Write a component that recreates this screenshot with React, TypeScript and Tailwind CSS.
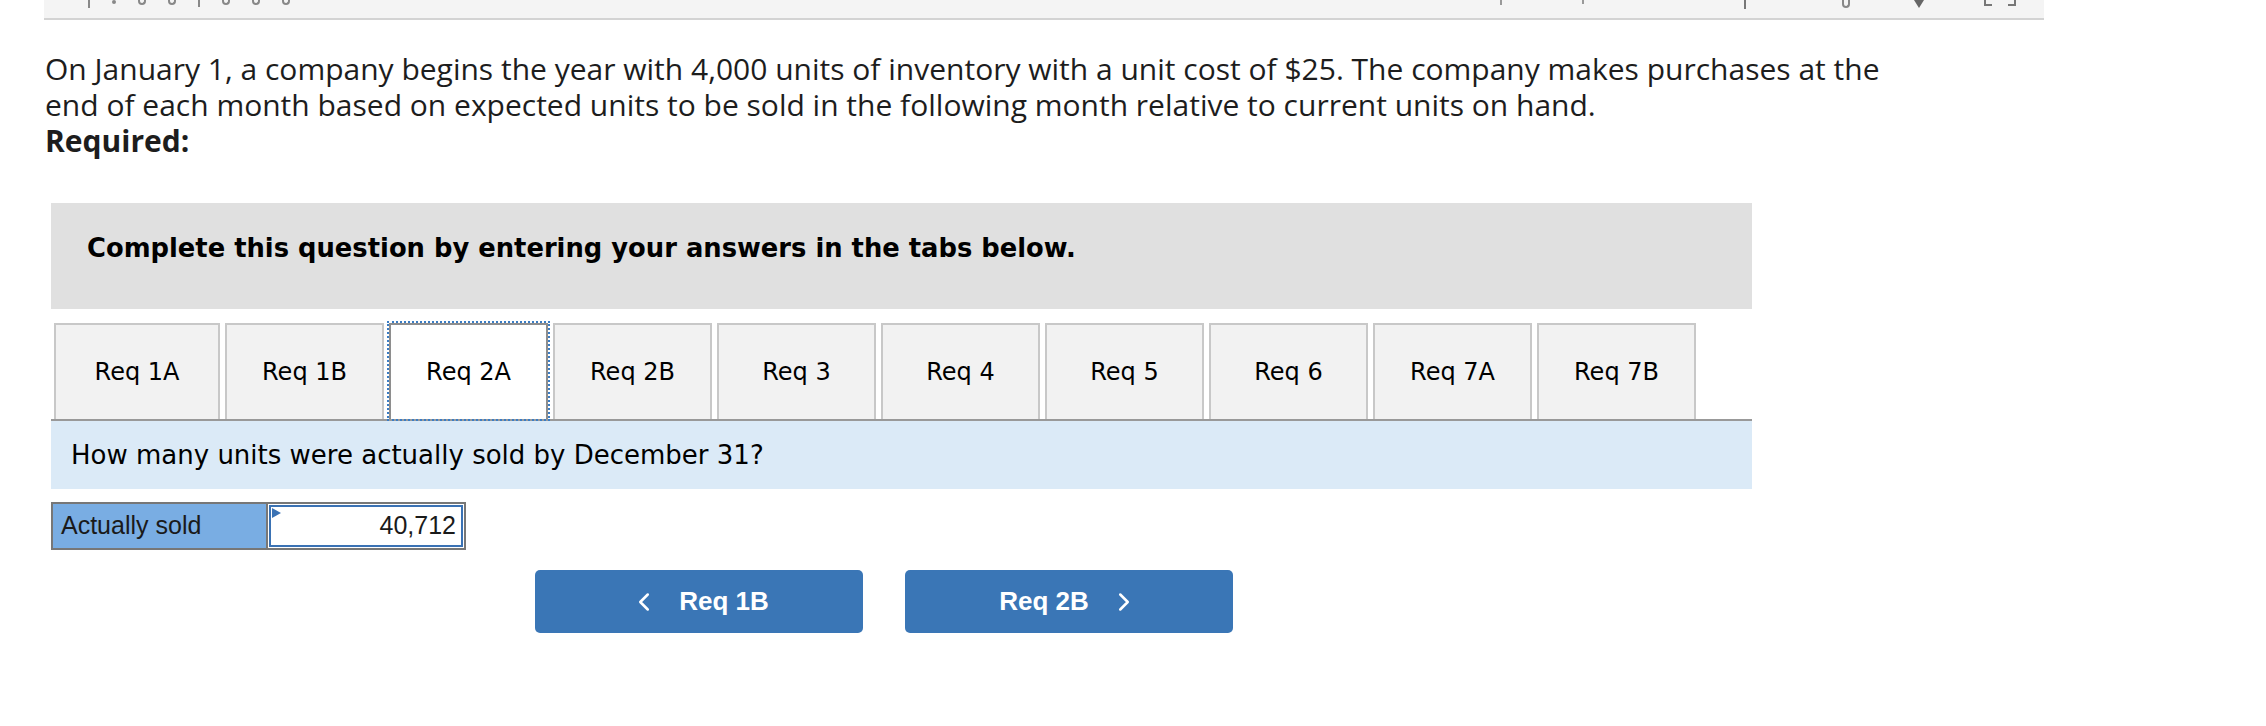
import { ChevronLeft, ChevronRight } from 'lucide-react'

const tabs = ['Req 1A', 'Req 1B', 'Req 2A', 'Req 2B', 'Req 3', 'Req 4', 'Req 5', 'Req 6', 'Req 7A', 'Req 7B']

export default function App() {
  return (
    <div className="w-[2266px] h-[726px] bg-white overflow-hidden">
      {/* cropped toolbar at top */}
      <div className="ml-[44px] w-[2000px] h-[20px] bg-[#f4f4f4] border-b-2 border-[#d3d3d3] flex items-start">
        <div className="ml-[44px] flex items-start gap-[22px] text-[#777]">
          <span className="w-[2px] h-[8px] bg-[#888]" />
          <span className="w-[4px] h-[4px] rounded-full bg-[#888]" />
          <span className="w-[8px] h-[5px] rounded-b-full border-2 border-t-0 border-[#888]" />
          <span className="w-[8px] h-[5px] rounded-b-full border-2 border-t-0 border-[#888]" />
          <span className="w-[2px] h-[7px] bg-[#888]" />
          <span className="w-[8px] h-[5px] rounded-b-full border-2 border-t-0 border-[#888]" />
          <span className="w-[8px] h-[5px] rounded-b-full border-2 border-t-0 border-[#888]" />
          <span className="w-[8px] h-[5px] rounded-b-full border-2 border-t-0 border-[#888]" />
        </div>
        <div className="ml-[1210px] flex items-start">
          <span className="w-[2px] h-[5px] bg-[#999]" />
          <span className="ml-[80px] w-[2px] h-[4px] bg-[#999]" />
          <span className="ml-[160px] w-[2px] h-[9px] bg-[#777]" />
          <span className="ml-[96px] w-[8px] h-[8px] rounded-b-full border-2 border-t-0 border-[#888]" />
          <span className="ml-[64px] w-0 h-0 border-l-[5px] border-r-[5px] border-t-[8px] border-l-transparent border-r-transparent border-t-[#666]" />
          <span className="ml-[60px] w-[8px] h-[6px] border-l-2 border-b-2 border-[#777]" />
          <span className="ml-[16px] w-[8px] h-[6px] border-r-2 border-b-2 border-[#777]" />
        </div>
      </div>

      <div
        className="ml-[45px] mt-[31px] w-[1845px] text-[30px] leading-[36px] text-[#1d1d1d]"
        style={{ fontFamily: '"Open Sans", sans-serif' }}
      >
        <p>
          On January 1, a company begins the year with 4,000 units of inventory with a unit cost of $25. The company makes purchases at the end of each month based on expected units to be sold in the following month relative to current units on hand.
        </p>
        <p className="font-bold">Required:</p>
      </div>

      <div className="ml-[51px] mt-[44px] w-[1701px]" style={{ fontFamily: '"DejaVu Sans", Verdana, sans-serif' }}>
        <div className="h-[106px] bg-[#e0e0e0] pl-[36px] pt-[30px]">
          <div className="text-[25.8px] leading-[30px] font-bold text-black">
            Complete this question by entering your answers in the tabs below.
          </div>
        </div>

        <div className="mt-[14px] pl-[3px] flex gap-[5px] items-end">
          {tabs.map((t, i) =>
            i === 2 ? (
              <div
                key={t}
                className="w-[159px] h-[96px] bg-white border-2 border-b-0 border-[#8e8e8e] outline-2 outline-dotted outline-[#3b7dc4] flex items-center justify-center text-[24px] text-black"
              >
                {t}
              </div>
            ) : (
              <div
                key={t}
                className={`${i === 0 ? 'w-[166px]' : 'w-[159px]'} h-[96px] bg-[#f2f2f2] border-2 border-b-0 border-[#c8c8c8] flex items-center justify-center text-[24px] text-black`}
              >
                {t}
              </div>
            )
          )}
        </div>

        <div className="h-[70px] border-t-2 border-[#999] bg-[#dbeaf7] pl-[20px] flex items-center text-[26px] text-black">
          How many units were actually sold by December 31?
        </div>

        <div className="mt-[13px] flex" style={{ fontFamily: '"Liberation Sans", Arial, sans-serif' }}>
          <div className="flex border-2 border-[#777] h-[48px]">
            <div className="w-[213px] bg-[#79ade3] pl-[8px] flex items-center text-[25px] text-[#1a1a1a]">
              Actually sold
            </div>
            <div className="w-[198px] border-l-2 border-[#777] p-[1px]">
              <div className="relative h-full bg-white border-2 border-[#3a72b4] flex items-center justify-end pr-[5px] text-[25px] text-[#1a1a1a]">
                <span className="absolute left-[1px] top-[1px] w-0 h-0 border-t-[5px] border-b-[5px] border-l-[9px] border-t-transparent border-b-transparent border-l-[#3a72b4]" />
                40,712
              </div>
            </div>
          </div>
        </div>

        <div
          className="mt-[20px] ml-[484px] flex gap-[42px] text-white font-bold text-[26px]"
          style={{ fontFamily: '"Liberation Sans", Arial, sans-serif' }}
        >
          <div className="w-[328px] h-[63px] rounded-[5px] bg-[#3a76b6] flex items-center justify-center gap-[20px]">
            <ChevronLeft size={30} strokeWidth={2} />
            <span>Req 1B</span>
          </div>
          <div className="w-[328px] h-[63px] rounded-[5px] bg-[#3a76b6] flex items-center justify-center gap-[20px]">
            <span>Req 2B</span>
            <ChevronRight size={30} strokeWidth={2} />
          </div>
        </div>
      </div>
    </div>
  )
}
